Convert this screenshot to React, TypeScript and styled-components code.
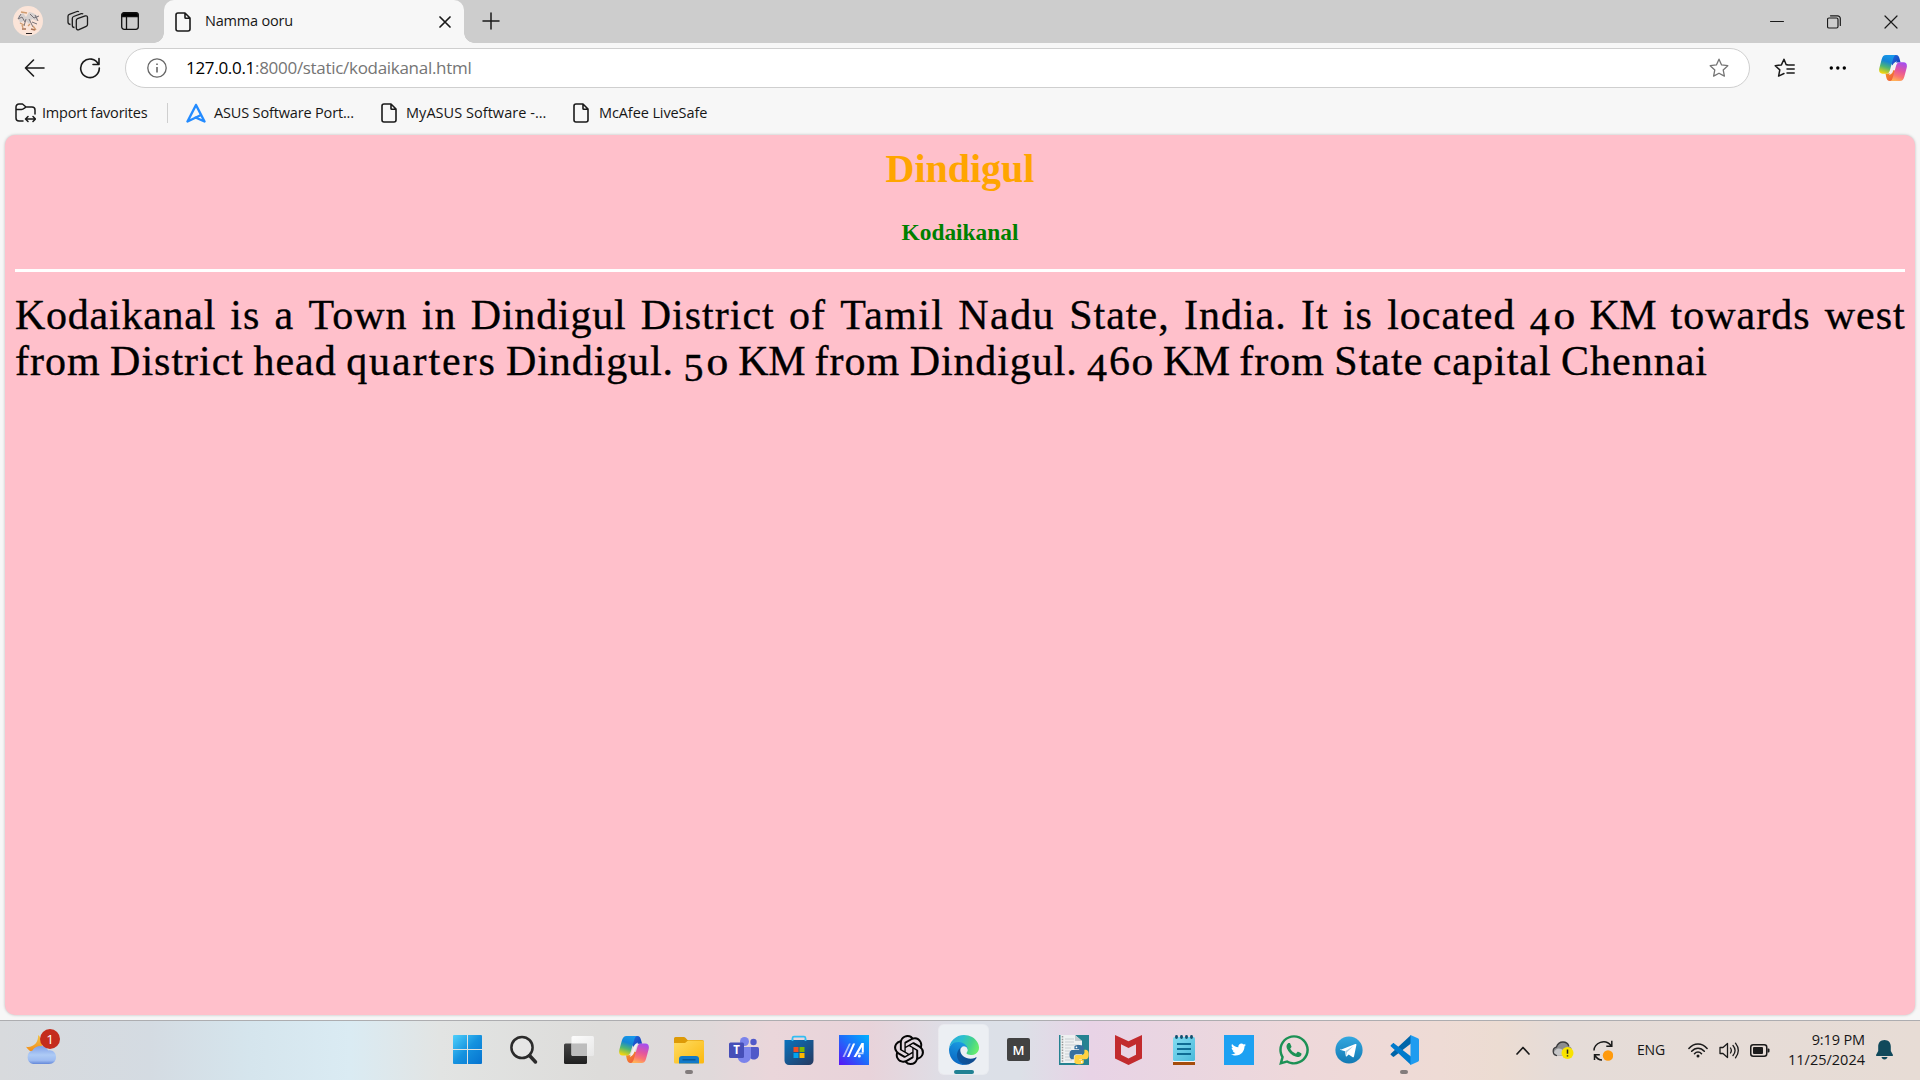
import React from "react";
import styled, { createGlobalStyle } from "styled-components";
import { SiOpenai } from "react-icons/si";
import { FaTwitter, FaWhatsapp } from "react-icons/fa";

const GlobalStyle = createGlobalStyle`
  * { box-sizing: border-box; }
  body { margin: 0; background: #f7f7f7; overflow: hidden; font-family: "Open Sans", "Noto Sans", sans-serif; }
  svg { display: block; flex: none; }
`;

const Screen = styled.div`
  width: 1920px;
  height: 1080px;
  display: flex;
  flex-direction: column;
  background: #f7f7f7;
  color: #111;
`;

const Label = styled.span<{ $size?: number; $track?: number; $color?: string }>`
  font-size: ${(p) => p.$size ?? 14.5}px;
  letter-spacing: ${(p) => p.$track ?? -0.12}px;
  color: ${(p) => p.$color ?? "#161616"};
  white-space: nowrap;
  line-height: 20px;
`;

/* ---------- tab strip ---------- */
const TabStrip = styled.header`
  height: 43px;
  display: flex;
  background: #cdcdcd;
`;
const StripTools = styled.div`
  width: 164px;
  padding: 0 0 1px 13px;
  display: flex;
  align-items: center;
  gap: 24px;
`;
const StripIcon = styled.div`
  padding-left: 8px;
`;
const Tab = styled.div`
  position: relative;
  width: 300px;
  height: 43px;
  padding: 0 13px 0 11px;
  display: flex;
  align-items: center;
  background: #f7f7f7;
  border-radius: 10px 10px 0 0;
  &::before, &::after {
    content: "";
    position: absolute;
    bottom: 0;
    width: 10px;
    height: 10px;
  }
  &::before { left: -10px; background: radial-gradient(circle at 0 0, #cdcdcd 9.5px, #f7f7f7 10px); }
  &::after { right: -10px; background: radial-gradient(circle at 100% 0, #cdcdcd 9.5px, #f7f7f7 10px); }
`;
const TabTitle = styled.div`
  flex: 1;
  display: flex;
  padding: 0 0 2px 14px;
`;
const NewTab = styled.div`
  padding: 0 0 2px 18px;
  display: flex;
  align-items: center;
  flex: 1;
`;
const WindowButtons = styled.div`
  display: flex;
  align-items: center;
  gap: 43px;
  padding-right: 22px;
`;

/* ---------- toolbar ---------- */
const Toolbar = styled.div`
  height: 48px;
  display: flex;
  align-items: center;
  padding: 2px 13px 0 24px;
`;
const NavButtons = styled.div`
  display: flex;
  align-items: center;
  gap: 34px;
  width: 101px;
`;
const AddressBar = styled.div`
  width: 1625px;
  height: 40px;
  border: 1px solid #cfcfcf;
  border-radius: 20px;
  background: #fff;
  display: flex;
  align-items: center;
  padding: 0 20px 0 21px;
`;
const Url = styled.div`
  flex: 1;
  padding-left: 19px;
  display: flex;
`;
const ToolButtons = styled.div`
  flex: 1;
  display: flex;
  align-items: center;
  justify-content: space-between;
  padding-left: 24px;
`;

const Favorites = styled.nav`
  height: 44px;
  display: flex;
  align-items: center;
  padding: 0 0 1px 15px;
`;
const Favorite = styled.div<{ $width: number; $gap: number }>`
  width: ${(p) => p.$width}px;
  display: flex;
  align-items: center;
  gap: ${(p) => p.$gap}px;
`;
const Divider = styled.div`
  width: 1px;
  height: 20px;
  background: #cfcfcf;
  margin-right: 18px;
`;

/* ---------- page ---------- */
const Page = styled.main`
  height: 880px;
  margin: 0 5px;
  padding: 8px 10px;
  background: #ffc0cb;
  border-radius: 10px;
  box-shadow: 0 0 3px rgba(0, 0, 0, 0.25);
  font-family: "Liberation Serif", serif;
`;
const Heading = styled.h1`
  margin: 3px 0 0;
  font-size: 40px;
  line-height: 46px;
  text-align: center;
  color: orange;
`;
const SubHeading = styled.h3`
  margin: 27px 0 23px;
  font-size: 23.4px;
  line-height: 27px;
  text-align: center;
  color: green;
`;
const Rule = styled.hr`
  margin: 0;
  height: 3px;
  border: 0;
  background: #fff;
`;
const Paragraph = styled.p`
  margin: 20px 0 0;
  color: #000;
`;
const Line = styled.span<{ $width: number }>`
  display: flex;
  justify-content: space-between;
  width: ${(p) => p.$width}px;
  height: 46px;
  font-size: 42px;
  line-height: 46px;
  white-space: nowrap;
  -webkit-text-stroke: 0.35px #000;
`;
const Word = styled.span<{ $track: number }>`
  letter-spacing: ${(p) => p.$track}px;
`;
const Digit = styled.span<{ $kind: "small" | "low" | "tall" }>`
  display: inline-block;
  letter-spacing: 0;
  line-height: 0;
  font-size: ${(p) => (p.$kind === "small" ? 29 : p.$kind === "low" ? 40 : 42)}px;
  transform: ${(p) => (p.$kind === "small" ? "scaleX(1.5)" : "none")};
  margin: ${(p) => (p.$kind === "small" ? "0 4px 0 5px" : p.$kind === "low" ? "0 2px 0 0" : "0")};
  vertical-align: ${(p) => (p.$kind === "low" ? "-6px" : "0")};
`;

/* ---------- taskbar ---------- */
const Taskbar = styled.footer`
  height: 60px;
  margin-top: auto;
  display: flex;
  border-top: 1px solid #adadb0;
  background: linear-gradient(90deg, #d8dadd 0, #d4dbe2 150px, #d5e5ed 250px, #daebf3 350px, #e2e4e3 440px,
    #dddcda 600px, #e0d9da 710px, #ead6da 770px, #e8d3da 870px, #dce0e8 960px, #dce0e7 1020px, #e8d3e6 1090px,
    #ead6e0 1190px, #eed8da 1300px, #eedbd5 1440px, #ecdcd2 1500px, #e5dcd8 1560px, #e7dcd5 1920px);
`;
const Widgets = styled.div`
  width: 440px;
  padding: 7px 0 0 25px;
`;
const Apps = styled.div`
  display: flex;
  padding-top: 4px;
`;
const AppSlot = styled.div<{ $active?: boolean; $state?: "open" | "focus"; $first?: boolean }>`
  position: relative;
  width: ${(p) => (p.$active ? 49 : p.$first ? 56 : 55)}px;
  margin: 0 ${(p) => (p.$active ? 3 : 0)}px;
  padding-right: ${(p) => (p.$first ? 2 : 0)}px;
  height: 49px;
  display: flex;
  align-items: center;
  justify-content: center;
  border-radius: 5px;
  background: ${(p) => (p.$active ? "#eceff3" : "transparent")};
  box-shadow: ${(p) => (p.$active ? "0 0 0 1px rgba(255,255,255,.35)" : "none")};
  &::after {
    content: "";
    display: ${(p) => (p.$state ? "block" : "none")};
    position: absolute;
    bottom: 0;
    left: calc(50% - ${(p) => (p.$state === "focus" ? 10 : 4)}px);
    width: ${(p) => (p.$state === "focus" ? 20 : 8)}px;
    height: 4px;
    border-radius: 2px;
    background: ${(p) => (p.$state === "focus" ? "#218294" : "#827c7c")};
  }
`;
const Tray = styled.div`
  display: flex;
  align-items: center;
  padding: 0 27px 1px 0;
  flex: 1;
  justify-content: flex-end;
`;
const TrayItem = styled.div<{ $width: number }>`
  width: ${(p) => p.$width}px;
  display: flex;
  justify-content: center;
`;
const Clock = styled.div`
  width: 87px;
  display: flex;
  flex-direction: column;
  align-items: flex-end;
  margin-right: 11px;
  padding-bottom: 1px;
`;
const Tile = styled.div`
  width: 30px;
  height: 30px;
  display: grid;
  place-items: center;
  background: #1da1f2;
  color: #fff;
`;
const LetterTile = styled.div`
  width: 23px;
  height: 23px;
  display: grid;
  place-items: center;
  border-radius: 2px;
  background: #424242;
  color: #fff;
  font: 600 13px "Open Sans", sans-serif;
`;

/* ---------- icons ---------- */
const Stroke = ({ w, h, d, sw = 1.4, color = "#1a1a1a" }: { w: number; h: number; d: string; sw?: number; color?: string }) => (
  <svg width={w} height={h} viewBox={`0 0 ${w} ${h}`} fill="none" stroke={color} strokeWidth={sw} strokeLinecap="round" strokeLinejoin="round">
    <path d={d} />
  </svg>
);

const DocIcon = () => (
  <Stroke w={16} h={20} sw={1.6} d="M3 1h7l5 5v11a2 2 0 0 1-2 2H3a2 2 0 0 1-2-2V3a2 2 0 0 1 2-2zM10 1v4.500a.8.8 0 0 0 .8.800H15" />
);

const Avatar = () => (
  <svg width="30" height="30" viewBox="0 0 30 30">
    <circle cx="15" cy="15" r="15" fill="#fbe4d8" />
    <path d="M5 10l5-3 3 4 3-5 4 1 5 3-1 5-5-2-3 5-4-4-5 3z" fill="#d5d0cf" />
    <path d="M5 13l4-2 3 5M17 8l4 4 5-2M8 8l-3 5M19 16l5 2M13 13l-2 7M16 13l4 8M22 9l3 6" stroke="#777176" strokeWidth="1" fill="none" />
    <path d="M8 6l6 1M10 22l-1-3M20 20l3 4M7 17l4 2M15 20l2-2" stroke="#cf9c70" strokeWidth="1.300" fill="none" />
    <path d="M9 23h4M18 23l4 1" stroke="#aa7354" strokeWidth="1.5" />
    <path d="M13 27.500h6" stroke="#2b2222" strokeWidth="1" />
  </svg>
);

const Workspaces = () => (
  <svg width="22" height="22" viewBox="0 0 22 22" fill="none" stroke="#1c1c1c" strokeWidth="1.300" strokeLinejoin="round">
    <path d="M10.500 8.600l7.700-2.700c1.200-.4 2.300.3 2.300 1.500v7.200c0 .8-.5 1.500-1.300 1.800l-7.200 3.200c-1.400.6-2.700-.1-2.700-1.600v-7.500c0-.9.4-1.600 1.200-1.900z" />
    <path d="M7.500 17.500c-1.500-.1-2.200-.8-2.200-2V8.400c0-.9.400-1.600 1.300-1.900l7.700-2.800c.8-.3 1.400-.1 1.800.4" />
    <path d="M3.500 14.500C1.800 14.300 1 13.600 1 12.300V6.200c0-.9.400-1.600 1.300-1.900L10 1.500c.8-.3 1.400-.1 1.800.4" />
  </svg>
);

const VerticalTabs = () => (
  <svg width="18" height="18" viewBox="0 0 18 18" fill="none" stroke="#111" strokeWidth="1.300">
    <rect x=".7" y=".7" width="16.600" height="16.600" rx="2.500" />
    <path d="M5.500 5v12" />
    <path d="M1 4.700V3a2.200 2.200 0 0 1 2.200-2.200h11.600A2.200 2.200 0 0 1 17 3v1.700z" fill="#000" />
  </svg>
);

const star = "M10 1.200l2.600 5.700 6.200.8-4.600 4.200 1.200 6.200L10 15.200l-5.400 2.900 1.200-6.200L1.200 7.700l6.200-.8z";

const Copilot = ({ w, h, id }: { w: number; h: number; id: string }) => (
  <svg width={w} height={h} viewBox="0 0 30 27" preserveAspectRatio="none">
    <defs>
      <linearGradient id={`${id}a`} x1=".6" y1="0" x2=".3" y2="1">
        <stop offset="0" stopColor="#1798ea" /><stop offset=".35" stopColor="#1585d6" /><stop offset=".65" stopColor="#4fb673" /><stop offset="1" stopColor="#f5d60c" />
      </linearGradient>
      <linearGradient id={`${id}b`} x1=".7" y1="0" x2=".4" y2="1">
        <stop offset="0" stopColor="#a44ef0" /><stop offset=".45" stopColor="#e3559e" /><stop offset=".75" stopColor="#fb7573" /><stop offset="1" stopColor="#ffb057" />
      </linearGradient>
      <linearGradient id={`${id}c`} x1="0" y1="0" x2="1" y2="1">
        <stop offset="0" stopColor="#1f6fe0" /><stop offset="1" stopColor="#1637b4" />
      </linearGradient>
      <linearGradient id={`${id}d`} x1="0" y1="0" x2="1" y2="1">
        <stop offset="0" stopColor="#f5a11c" /><stop offset="1" stopColor="#ee4b45" />
      </linearGradient>
    </defs>
    <path d="M14 0h4.200c2.700 0 3.300 1.800 4 4.500l.9 3.200h-3.500c-2.700 0-3.600 1-4.400 3.500L13 9z" fill={`url(#${id}c)`} />
    <path d="M16 27h-4.300c-2.600 0-3.300-1.700-4-4.200L7 19.300h3.200c2.800 0 3.600-1.300 4.500-4l3 1z" fill={`url(#${id}d)`} />
    <path d="M7.500 0H18c-1.500.5-2.300 2-3 4.500l-3.200 11c-.9 2.900-2 3.900-4.400 3.900H3.700C.6 19.400-.5 17 .4 13.500L2.800 4.800C3.700 1.500 5 0 7.500 0z" fill={`url(#${id}a)`} />
    <path d="M22.500 27H12c1.500-.5 2.300-2 3-4.500l3.200-11c.9-2.900 2-3.900 4.400-3.900h3.700c3.100 0 4.200 2.400 3.300 5.900l-2.400 8.700C26.300 25.500 25 27 22.500 27z" fill={`url(#${id}b)`} />
    <path d="M17.300 8.600c-1 .6-1.600 1.600-2.100 3.200L12.500 19c.9-.5 1.500-1.600 2.200-3.700z" fill="#f3f0f0" stroke="#f3f0f0" strokeWidth="1.800" />
  </svg>
);

const Weather = () => (
  <svg width="36" height="38" viewBox="0 0 36 38">
    <defs>
      <linearGradient id="moon" x1="0" y1="0" x2="0" y2="1"><stop offset="0" stopColor="#f3c54a" /><stop offset="1" stopColor="#f28a17" /></linearGradient>
      <linearGradient id="cloud" x1="0" y1="0" x2="0" y2="1"><stop offset="0" stopColor="#7f9fe8" /><stop offset=".5" stopColor="#aecbf5" /><stop offset=".8" stopColor="#9dbbf1" /><stop offset="1" stopColor="#6488d9" /></linearGradient>
    </defs>
    <path d="M13 7c5 3 7 15-3 17-4 .5-7-2-9-5.300 6 1.500 13-3.700 12-11.700z" fill="url(#moon)" />
    <path d="M8 36a7 7 0 0 1-.5-13.500C9 19.500 12 18 15.500 18c4 0 6.700 2 7.700 4.500 4.300-.8 7.800 2.200 7.800 6.500 0 4-2.600 7-7 7z" fill="url(#cloud)" />
    <circle cx="25" cy="11" r="10" fill="#c42b1c" />
    <text x="25" y="16" textAnchor="middle" fontSize="13.500" fontFamily="Open Sans, sans-serif" fill="#fff">1</text>
  </svg>
);

const WindowsLogo = () => (
  <svg width="29" height="29" viewBox="0 0 29 29">
    <defs><linearGradient id="win" x1="0" y1="0" x2="1" y2="1"><stop offset="0" stopColor="#4fd0fb" /><stop offset=".5" stopColor="#1592df" /><stop offset="1" stopColor="#0673cf" /></linearGradient></defs>
    <path d="M1 0h13v14H0V1a1 1 0 0 1 1-1zM15 0h13a1 1 0 0 1 1 1v13H15zM0 15h14v14H1a1 1 0 0 1-1-1zM15 15h14v13a1 1 0 0 1-1 1H15z" fill="url(#win)" />
  </svg>
);

const Search = () => (
  <svg width="28" height="30" viewBox="0 0 28 30" fill="none" stroke="#2b2b2b">
    <circle cx="12" cy="12.500" r="10.600" strokeWidth="2.500" fill="#ececec" fillOpacity=".5" />
    <path d="M19.500 20.500l6 6.500" strokeWidth="3.500" strokeLinecap="round" />
  </svg>
);

const TaskView = () => (
  <svg width="30" height="30" viewBox="0 0 30 30">
    <defs>
      <linearGradient id="tv1" x1="0" y1="0" x2="0" y2="1"><stop offset="0" stopColor="#454545" /><stop offset="1" stopColor="#202020" /></linearGradient>
      <linearGradient id="tv2" x1="0" y1="0" x2="1" y2="1"><stop offset="0" stopColor="#fff" /><stop offset="1" stopColor="#e8e8e8" /></linearGradient>
    </defs>
    <rect y="8.500" width="23" height="20.500" rx="1.500" fill="url(#tv1)" />
    <rect x="7.500" y="1" width="22.500" height="20" rx="1.500" fill="url(#tv2)" opacity=".93" />
    <path d="M7.500 8.500H23V21H9a1.500 1.500 0 0 1-1.500-1.500z" fill="#bdbdbd" />
  </svg>
);

const Folder = () => (
  <svg width="30" height="30" viewBox="0 0 30 30">
    <defs><linearGradient id="fold" x1="0" y1="0" x2="1" y2="1"><stop offset="0" stopColor="#ffdc62" /><stop offset="1" stopColor="#fbb80d" /></linearGradient></defs>
    <path d="M0 3.500A1.500 1.500 0 0 1 1.500 2h8.200c.8 0 1.200.3 1.700.8L13.500 5H28a2 2 0 0 1 2 2v5H0z" fill="#dd9a07" />
    <path d="M0 8h11l3-2.500h14.500A1.500 1.500 0 0 1 30 7v20a1.500 1.500 0 0 1-1.500 1.500h-27A1.500 1.500 0 0 1 0 27z" fill="url(#fold)" />
    <path d="M5 28.500V24a3 3 0 0 1 3-3h14a3 3 0 0 1 3 3v4.500z" fill="#127ac9" />
    <path d="M8.500 24.800h13" stroke="#08508c" strokeWidth="1.200" />
  </svg>
);

const Teams = () => (
  <svg width="30" height="30" viewBox="0 0 30 30">
    <circle cx="24.500" cy="7" r="3.200" fill="#5059c9" />
    <path d="M20 12h8.500A1.500 1.500 0 0 1 30 13.500V19c0 3-2 5.500-5 5.500s-5-2-5-5z" fill="#5059c9" />
    <circle cx="15.500" cy="6.500" r="4.500" fill="#7b83eb" />
    <path d="M9 12h13v9c0 4-3 7-6.800 7S8.500 25 8.500 21z" fill="#7b83eb" />
    <rect y="7.500" width="15" height="15.500" rx="1.500" fill="#464eb8" />
    <text x="7.500" y="19.300" textAnchor="middle" fontSize="11.500" fontWeight="700" fontFamily="Open Sans, sans-serif" fill="#fff">T</text>
  </svg>
);

const Store = () => (
  <svg width="30" height="30" viewBox="0 0 30 30">
    <defs><linearGradient id="store" x1="0" y1="0" x2="1" y2="1"><stop offset="0" stopColor="#0a72bd" /><stop offset="1" stopColor="#263a60" /></linearGradient></defs>
    <path d="M8.500 6V3a1.500 1.500 0 0 1 1.500-1.300h10A1.500 1.500 0 0 1 21.500 3v3" fill="none" stroke="#32bdf2" strokeWidth="1.800" />
    <path d="M.5 5h29v20.500A4.500 4.500 0 0 1 25 30H5a4.500 4.500 0 0 1-4.500-4.500z" fill="url(#store)" />
    <path d="M8.500 6V4.500M21.500 6V4.500" stroke="#32bdf2" strokeWidth="1.800" />
    <rect x="9.500" y="12" width="5" height="5" fill="#f25022" /><rect x="15.500" y="12" width="5" height="5" fill="#7fba00" />
    <rect x="9.500" y="18" width="5" height="5" fill="#00a4ef" /><rect x="15.500" y="18" width="5" height="5" fill="#ffb900" />
  </svg>
);

const MyAsus = () => (
  <svg width="30" height="30" viewBox="0 0 30 30">
    <defs><linearGradient id="asus" x1="0" y1="1" x2="1" y2="0"><stop offset="0" stopColor="#5a14f5" /><stop offset=".5" stopColor="#1f6bfa" /><stop offset="1" stopColor="#00b2ff" /></linearGradient></defs>
    <path d="M0 0h30v30H0z" fill="url(#asus)" />
    <path d="M3.500 22L10 8.500h1.800L5.500 22z" fill="#fff" opacity=".6" />
    <path d="M8 22L14 8.500h2.200L10.200 22zM14.500 22l8-14h2.300v9.500h-2v-5.500L17 22z" fill="#fff" />
    <path d="M18.500 17.500h6v1.800h-7z" fill="#fff" opacity=".7" />
    <circle cx="20.300" cy="21" r="1.500" fill="#fff" />
  </svg>
);

const Edge = () => (
  <svg width="30" height="30" viewBox="0 0 256 256">
    <defs>
      <linearGradient id="e1" x1="0" y1="0" x2="1" y2="0"><stop offset="0" stopColor="#0c59a4" /><stop offset="1" stopColor="#114a8b" /></linearGradient>
      <linearGradient id="e2" x1=".6" y1="0" x2=".3" y2="1"><stop offset="0" stopColor="#1b9de2" /><stop offset=".5" stopColor="#1180d2" /><stop offset="1" stopColor="#0a65c0" /></linearGradient>
      <linearGradient id="e3" x1="0" y1=".2" x2="1" y2=".5"><stop offset="0" stopColor="#2aa9dd" /><stop offset=".4" stopColor="#2bbfcf" /><stop offset=".75" stopColor="#45d38a" /><stop offset="1" stopColor="#66eb6e" /></linearGradient>
    </defs>
    <path fill="url(#e1)" d="M231 190.500c-3.400 1.800-6.900 3.400-10.500 4.700a101.500 101.500 0 0 1-35.900 6.400c-47.300 0-88.500-32.500-88.500-74.300a31.500 31.500 0 0 1 16.400-27.300c-42.800 1.800-53.800 46.400-53.800 72.500 0 73.900 68.100 81.400 82.800 81.400 7.900 0 19.800-2.300 27-4.600l1.300-.4A128.300 128.300 0 0 0 236.100 194.500a3.700 3.700 0 0 0-5.100-4z" />
    <path fill="url(#e2)" d="M105.700 241.400a79.200 79.200 0 0 1-22.700-21.300 80.700 80.700 0 0 1 29.500-120c3.200-1.500 8.500-4.100 15.600-4a32.400 32.400 0 0 1 25.700 13 31.900 31.900 0 0 1 6.300 18.700c0-.2 24.500-79.600-80-79.600-43.900 0-80 41.600-80 78.200a130.200 130.200 0 0 0 12.100 56 128 128 0 0 0 156.400 67.100 75.500 75.500 0 0 1-62.900-8.100z" />
    <path fill="url(#e3)" d="M152.300 148.900c-.8 1-3.300 2.500-3.300 5.700 0 2.600 1.700 5.100 4.700 7.200 14.400 10 41.500 8.700 41.600 8.700 10.700 0 21.100-2.900 30.300-8.300a61.400 61.400 0 0 0 30.400-52.900c.3-22.400-8-37.300-11.300-43.900C223.500 23.900 177.700 0 128 0A128 128 0 0 0 0 126.200C.5 89.700 36.800 60.200 80 60.200c3.500 0 23.500.3 42 10.100 16.300 8.600 24.900 18.900 30.800 29.200 6.200 10.700 7.300 24.100 7.300 29.500s-2.700 13.300-7.800 19.900z" />
  </svg>
);

const snake =
  "M14.250.18l.9.2.73.26.59.3.45.32.34.34.25.34.16.33.1.3.04.26.02.2-.01.13V8.500l-.05.63-.13.55-.21.46-.26.38-.3.31-.33.25-.35.19-.35.14-.33.1-.3.07-.26.04-.21.02H8.770l-.69.05-.59.14-.5.22-.41.27-.33.32-.27.35-.2.36-.15.37-.1.35-.07.32-.04.27-.02.21v3.060H3.170l-.21-.03-.28-.07-.32-.12-.35-.18-.36-.26-.36-.36-.35-.46-.32-.59-.28-.73-.21-.88-.14-1.050-.05-1.230.06-1.220.16-1.040.24-.87.32-.71.36-.57.4-.44.42-.33.42-.24.4-.16.36-.1.32-.05.24-.01h.16l.06.01h8.160v-.83H6.180l-.01-2.750-.02-.37.05-.34.11-.31.17-.28.25-.26.31-.23.38-.2.44-.18.51-.15.58-.12.64-.1.71-.06.77-.04.84-.02 1.270.05z";
const PythonFile = () => (
  <svg width="30" height="30" viewBox="0 0 30 30">
    <path d="M0 0h30v30H0z" fill="#258291" />
    <path d="M1.500 0H16l7 6v22H1.500z" fill="#eef0f1" />
    <path d="M16 0l7 6h-7z" fill="#c4cbd0" />
    <path d="M3.500 1v26" stroke="#9a9a9a" strokeWidth="1.500" strokeDasharray="1.500 1.200" />
    <path d="M6 4h9M6 7h9M6 10h14M6 13h6M6 16h5M6 19h4M6 22h8M6 25h7" stroke="#c9ced2" strokeWidth="1" />
    <g transform="translate(10.500 10) scale(.8)">
      <path d={snake} fill="#38719f" />
      <path d={snake} fill="#ffd242" transform="rotate(180 12 12)" />
      <circle cx="8.700" cy="2.900" r="1.100" fill="#fff" /><circle cx="15.300" cy="21.100" r="1.100" fill="#fff" />
    </g>
  </svg>
);

const McAfee = () => (
  <svg width="27" height="30" viewBox="0 0 27 30">
    <path d="M0 0l13.500 6.300L27 0v23.500L13.500 30 0 23.500zM6 9.200v10.600l7.500 3.800 7.500-3.800V9.200L13.500 13z" fill="#c22b2e" fillRule="evenodd" />
  </svg>
);

const Notepad = () => (
  <svg width="22" height="30" viewBox="0 0 22 30">
    <defs><linearGradient id="note" x1="0" y1="0" x2="1" y2="1"><stop offset="0" stopColor="#83dcf1" /><stop offset="1" stopColor="#4bbadb" /></linearGradient></defs>
    <path d="M0 25h22v5H0z" fill="#a54c0c" /><path d="M0 25h22v2H0z" fill="#f5f5f5" />
    <rect y="2" width="22" height="24" rx="1.500" fill="url(#note)" />
    <path d="M4 9h14M4 14h14M4 19h14" stroke="#0f6c94" strokeWidth="2" />
    <path d="M3.500 1.500v1M8.500 1.500v1M13.500 1.500v1M18.500 1.500v1" stroke="#14506e" strokeWidth="2.800" strokeLinecap="round" />
  </svg>
);

const Telegram = () => (
  <svg width="28" height="28" viewBox="0 0 28 28">
    <defs><linearGradient id="tg" x1="0" y1="0" x2="0" y2="1"><stop offset="0" stopColor="#34a8e0" /><stop offset="1" stopColor="#1279b3" /></linearGradient></defs>
    <circle cx="14" cy="14" r="13.600" fill="url(#tg)" />
    <path d="M5.700 13.800L20.300 8c.8-.3 1.300.2 1.100 1.100L19 20.500c-.2.900-.9 1.100-1.600.6l-3.700-2.700-1.900 1.800c-.5.5-.9.3-1-.3l-.8-4.600-4.200-1.300c-.8-.200-.8-.9-.1-1.200z" fill="#fff" />
    <path d="M10.200 15.300l8.300-5.300-6.600 6.300-.6 3.500z" fill="#a9cfe3" />
  </svg>
);

const VsCode = () => (
  <svg width="30" height="30" viewBox="0 0 30 30">
    <path d="M22 0L2 18.500c-.6.600-.6 1 0 1.600l1.700 1.500c.5.5 1 .4 1.500 0L22 8.500z" fill="#0065a9" />
    <path d="M22 30L2 11.500c-.6-.6-.6-1 0-1.600l1.700-1.500c.5-.5 1-.4 1.500 0L22 21.500z" fill="#007acc" />
    <path d="M21.500 0l7.300 3.200c.8.400 1.200.9 1.200 1.800v20c0 .9-.4 1.400-1.200 1.800L21.500 30z" fill="#1f9cf0" />
  </svg>
);

const CloudAlert = () => (
  <svg width="22" height="18" viewBox="0 0 22 18">
    <path d="M5 14.500a4.300 4.300 0 0 1-.7-8.400C5.500 2.700 8 1 11 1c2.800 0 5 1.500 5.800 4.200 2.200.5 3.200 2.200 3.200 4.300 0 3-2 5-5 5z" fill="#8d8d8f" />
    <path d="M4.300 6.500C5.500 2.700 8 1 11 1c2.800 0 5 1.500 5.800 4.200" fill="none" stroke="#3b3b3d" strokeWidth="1.300" />
    <path d="M5 14.500a4.300 4.300 0 0 1-.7-8.400" fill="none" stroke="#3b3b3d" strokeWidth="1.300" />
    <path d="M2 12c1-5 6-6 10-2l5 2-3 2H5z" fill="#c7c7c8" />
    <circle cx="15.500" cy="12" r="6" fill="#f9e300" />
    <path d="M15.500 8.500v4.200M15.500 14.200v1.200" stroke="#222" strokeWidth="1.500" />
  </svg>
);

const Sync = () => (
  <svg width="20" height="21" viewBox="0 0 20 21">
    <path d="M1 10.500C1.300 3 12 -2 18 5.500M18.800 .8v5.500h-5.500M9 20c-3 0-5.500-2-7-4.500M1.500 20v-5.300h5.300" fill="none" stroke="#1b1b1b" strokeWidth="1.500" />
    <circle cx="15" cy="15.500" r="5.200" fill="#ff9a0c" />
  </svg>
);

const Wifi = () => (
  <svg width="20" height="15" viewBox="0 0 20 15" fill="none" stroke="#1b1b1b" strokeWidth="1.500" strokeLinecap="round">
    <path d="M.9 5.500c5-6 13.200-6 18.200 0M3.700 8.300c3.500-4.200 9.100-4.200 12.600 0M6.500 10.800c2-2.300 5-2.300 7 0" />
    <circle cx="10" cy="13" r="1.500" fill="#1b1b1b" stroke="none" />
  </svg>
);

const Battery = () => (
  <svg width="20" height="13" viewBox="0 0 20 13">
    <rect x=".75" y=".75" width="16" height="11.500" rx="2.500" fill="none" stroke="#1b1b1b" strokeWidth="1.500" />
    <rect x="3" y="3" width="10" height="7" rx="1" fill="#1b1b1b" />
    <path d="M17.500 4.500h1a1 1 0 0 1 1 1v2a1 1 0 0 1-1 1h-1z" fill="#1b1b1b" />
  </svg>
);

const Bell = () => (
  <svg width="17" height="20" viewBox="0 0 17 20" fill="#10495b">
    <path d="M8.500 0c-4 0-6.300 2.800-6.300 6.500v4.500L0 15c-.2.500.1 1 .7 1h15.600c.6 0 .9-.5.7-1l-2.200-4V6.500C14.800 2.800 12.500 0 8.500 0zM5.500 17h6c-.3 1.600-1.400 2.500-3 2.500S5.800 18.600 5.500 17z" />
  </svg>
);

const apps: { name: string; icon: React.ReactNode; state?: "open" | "focus" }[] = [
  { name: "start", icon: <WindowsLogo /> },
  { name: "search", icon: <Search /> },
  { name: "taskview", icon: <TaskView /> },
  { name: "copilot", icon: <Copilot w={30} h={27} id="tb" /> },
  { name: "explorer", icon: <Folder />, state: "open" },
  { name: "teams", icon: <Teams /> },
  { name: "store", icon: <Store /> },
  { name: "myasus", icon: <MyAsus /> },
  { name: "chatgpt", icon: <SiOpenai size={30} color="#050505" /> },
  { name: "edge", icon: <Edge />, state: "focus" },
  { name: "m", icon: <LetterTile>M</LetterTile> },
  { name: "python", icon: <PythonFile /> },
  { name: "mcafee", icon: <McAfee /> },
  { name: "notepad", icon: <Notepad /> },
  { name: "twitter", icon: <Tile><FaTwitter size={15} /></Tile> },
  { name: "whatsapp", icon: <FaWhatsapp size={34} color="#1c9155" /> },
  { name: "telegram", icon: <Telegram /> },
  { name: "vscode", icon: <VsCode />, state: "open" },
];

const digitKind = (c: string) => ("012".includes(c) ? "small" : "68".includes(c) ? "tall" : "low");

const tracking: Record<string, number> = {
  Kodaikanal: 0.75,
  Dindigul: 0.8,
  "Dindigul.": 0.9,
  District: 1,
  Tamil: 1.3,
  Nadu: 1.4,
  quarters: 1.9,
  KM: -0.4,
  towards: 1,
};

const Words = ({ text }: { text: string }) => (
  <>
    {text.split(" ").map((word, i) => (
      <Word key={i} $track={tracking[word] ?? 1}>
        {/\d/.test(word)
          ? word.split("").map((c, j) => <Digit key={j} $kind={digitKind(c)}>{c}</Digit>)
          : word}{" "}
      </Word>
    ))}
  </>
);

export default function App() {
  return (
    <Screen>
      <GlobalStyle />
      <TabStrip>
        <StripTools>
          <Avatar />
          <Workspaces />
          <StripIcon><VerticalTabs /></StripIcon>
        </StripTools>
        <Tab>
          <DocIcon />
          <TabTitle><Label $track={-0.2}>Namma ooru</Label></TabTitle>
          <Stroke w={12} h={12} sw={1.7} d="M1 1l10 10M11 1L1 11" />
        </Tab>
        <NewTab><Stroke w={18} h={18} sw={1.5} d="M9 1v16M1 9h16" /></NewTab>
        <WindowButtons>
          <Stroke w={14} h={14} sw={1} d="M.5 6.500h13" />
          <Stroke w={14} h={14} sw={1.2} d="M2 3h7.500a1.500 1.500 0 0 1 1.500 1.500V11.500a1.500 1.500 0 0 1-1.500 1.500H2a1.500 1.500 0 0 1-1.500-1.500V4.500A1.500 1.500 0 0 1 2 3zM3.500 .8H10.500a2.800 2.800 0 0 1 2.800 2.800V10.500" />
          <Stroke w={14} h={14} sw={1.2} d="M1 1l12 12M13 1L1 13" />
        </WindowButtons>
      </TabStrip>

      <Toolbar>
        <NavButtons>
          <Stroke w={21} h={18} sw={1.6} d="M20 9H1.500M9.500 1L1.500 9l8 8" />
          <Stroke w={22} h={22} sw={1.6} d="M19.500 7.500A9.300 9.300 0 1 0 20.300 11M20 1.500v6h-6" />
        </NavButtons>
        <AddressBar>
          <svg width="20" height="20" viewBox="0 0 20 20" fill="none" stroke="#666" strokeWidth="1.300">
            <circle cx="10" cy="10" r="9.200" /><path d="M10 9v5.500M10 5.500v1.600" strokeWidth="1.600" />
          </svg>
          <Url>
            <Label $size={17} $track={-0.3} $color="#000">127.0.0.1</Label>
            <Label $size={17} $track={-0.3} $color="#757575">:8000/static/kodaikanal.html</Label>
          </Url>
          <Stroke w={20} h={20} sw={1.3} color="#757575" d={star} />
        </AddressBar>
        <ToolButtons>
          <Stroke w={21} h={20} sw={1.5} d="M13.500 6.800L12.200 6.700 10 1.200 7.400 6.900 1.200 7.700l4.600 4.200-1.200 6.200L10 15.500M13.500 6.900h6.700M13 11h7.200M13 15h7.200" />
          <svg width="18" height="4" viewBox="0 0 18 4"><circle cx="3.300" cy="2" r="1.700" /><circle cx="9.800" cy="2" r="1.700" /><circle cx="16.300" cy="2" r="1.700" /></svg>
          <Copilot w={28} h={26} id="tool" />
        </ToolButtons>
      </Toolbar>

      <Favorites>
        <Favorite $width={152} $gap={6}>
          <Stroke w={21} h={20} sw={1.5} d="M8 18H4a3 3 0 0 1-3-3V4a3 3 0 0 1 3-3h3.500L11 4h6a3 3 0 0 1 3 3v4M1 6.500h5.500c1.300 0 2-.5 2.700-1.200L11 4M11 16h9M13 13.500L10.500 16l2.500 2.500M18 13.500l2.500 2.500-2.500 2.500" />
          <Label $track={-0.2}>Import favorites</Label>
        </Favorite>
        <Divider />
        <Favorite $width={195} $gap={8}>
          <Stroke w={20} h={20} sw={2.4} color="#238bff" d="M10 2L1.500 18.500 14 12.500M10 2l8.500 16.500-9-4" />
          <Label $track={-0.16}>ASUS Software Port...</Label>
        </Favorite>
        <Favorite $width={192} $gap={9}><DocIcon /><Label $track={0.04}>MyASUS Software -...</Label></Favorite>
        <Favorite $width={170} $gap={10}><DocIcon /><Label $track={-0.1}>McAfee LiveSafe</Label></Favorite>
      </Favorites>

      <Page>
        <Heading>Dindigul</Heading>
        <SubHeading>Kodaikanal</SubHeading>
        <Rule />
        <Paragraph>
          <Line $width={1891}><Words text="Kodaikanal is a Town in Dindigul District of Tamil Nadu State, India. It is located 40 KM towards west" /></Line>
          <Line $width={1693}><Words text="from District head quarters Dindigul. 50 KM from Dindigul. 460 KM from State capital Chennai" /></Line>
        </Paragraph>
      </Page>

      <Taskbar>
        <Widgets><Weather /></Widgets>
        <Apps>
          {apps.map((a, i) => (
            <AppSlot key={a.name} $first={i === 0} $active={a.state === "focus"} $state={a.state}>{a.icon}</AppSlot>
          ))}
        </Apps>
        <Tray>
          <TrayItem $width={40}><Stroke w={14} h={9} sw={1.7} d="M1 8l6-6.500L13 8" /></TrayItem>
          <TrayItem $width={40}><CloudAlert /></TrayItem>
          <TrayItem $width={40}><Sync /></TrayItem>
          <TrayItem $width={56}><Label $size={14}>ENG</Label></TrayItem>
          <TrayItem $width={38}><Wifi /></TrayItem>
          <TrayItem $width={24}>
            <Stroke w={20} h={17} sw={1.3} d="M1 5.500h3L8.500 1.500v14L4 11.500H1zM11.500 6c1 1.500 1 3.500 0 5M14 3.500c2.500 3 2.500 7 0 10M16.500 1.200c3.500 4.500 3.500 10 0 14.600" />
          </TrayItem>
          <TrayItem $width={37}><Battery /></TrayItem>
          <Clock>
            <Label $size={14.5}>9:19 PM</Label>
            <Label $size={14.5} $track={0}>11/25/2024</Label>
          </Clock>
          <Bell />
        </Tray>
      </Taskbar>
    </Screen>
  );
}
